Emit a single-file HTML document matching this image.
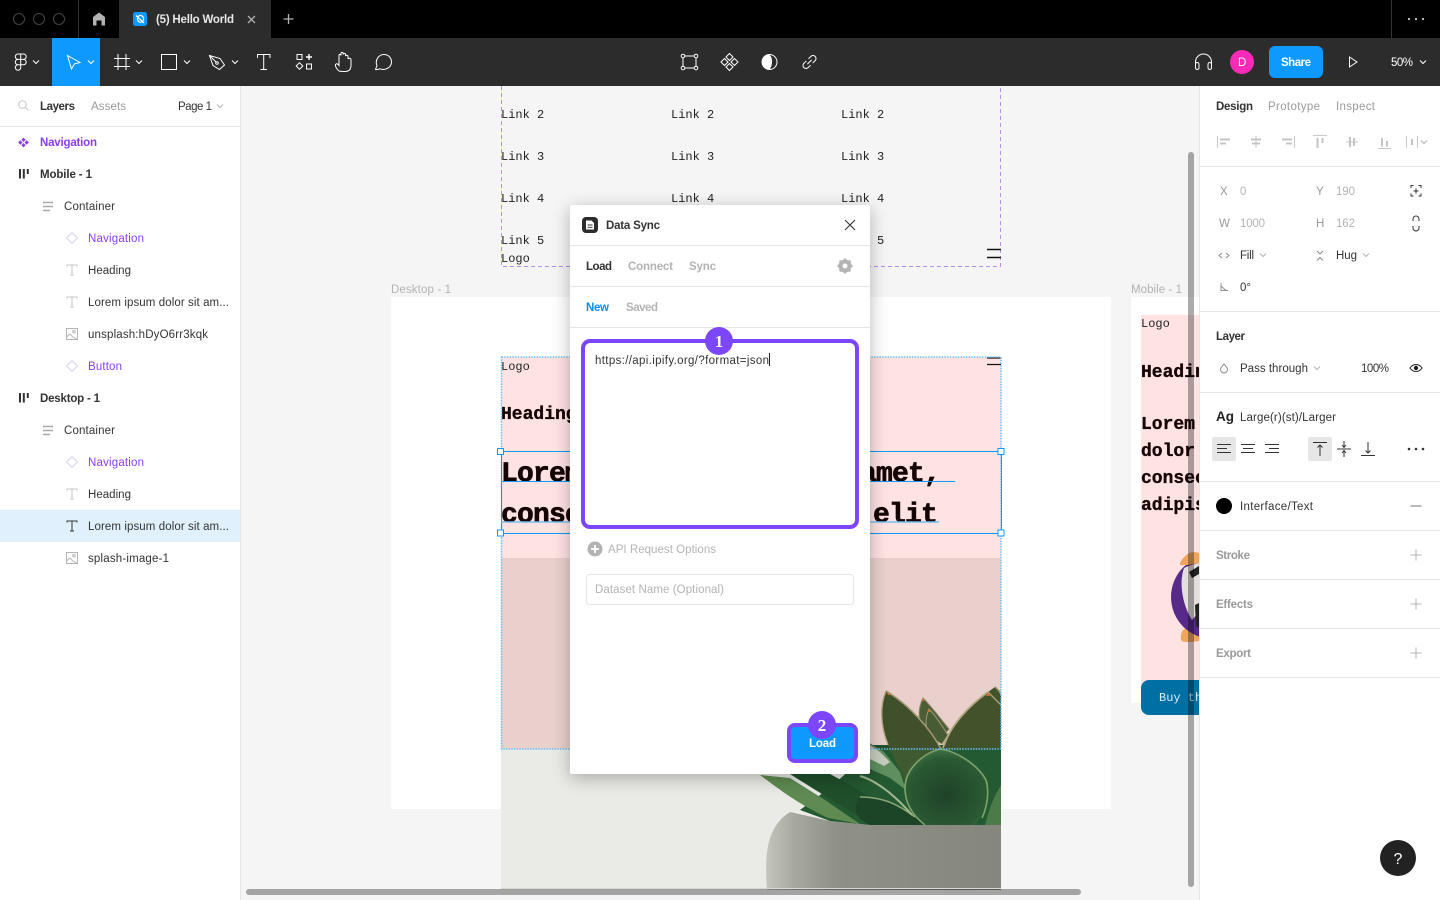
<!DOCTYPE html>
<html lang="en"><head><meta charset="utf-8"><title>(5) Hello World</title>
<style>
html,body{margin:0;padding:0;width:1440px;height:900px;overflow:hidden;background:#f5f5f5}
svg{display:block;position:absolute;left:0;top:0}
text{font-family:"Liberation Sans",sans-serif;font-size:11.5px;fill:#333;white-space:pre}
.b{font-weight:700}
.g{fill:#9a9a9a}
.lg{fill:#b3b3b3}
.p{fill:#8a3ff0}
.w{fill:#fff}
.m{font-family:"Liberation Mono",monospace;font-size:12px;fill:#222}
.mb{font-family:"Liberation Mono",monospace;font-weight:700;fill:#160404;stroke:#160404;stroke-width:.35px}
.big{font-size:28px;letter-spacing:-.8px;stroke-width:.7px}
.ic{fill:none;stroke:#fff;stroke-width:1}
.icl{fill:none;stroke:#c4c4c4;stroke-width:1}
</style></head><body>
<svg width="1440" height="900" viewBox="0 0 1440 900" xmlns="http://www.w3.org/2000/svg">
<defs>
<path id="chev" d="M-3 -1.5L0 1.5L3 -1.5" fill="none" stroke="#fff" stroke-width="1"/>
<path id="chevg" d="M-3 -1.5L0 1.5L3 -1.5" fill="none" stroke="#b3b3b3" stroke-width="1"/>
<path id="tt" d="M-5 -3.5V-5H5V-3.5M0 -5V5M-2 5H2" fill="none" stroke="#c4c4c4" stroke-width="1"/>
<path id="dia" d="M0 -5.5L5.5 0L0 5.5L-5.5 0Z" fill="none" stroke="#dccff5" stroke-width="1"/>
<g id="cont"><path d="M0 .5H10M0 4.500H10M0 8.500H7" stroke="#a8a8a8" stroke-width="1.400" fill="none"/></g>
<g id="fr"><path d="M1 0V9.500M4.800 0V9.500M8.800 0V5" stroke="#333" stroke-width="2" fill="none"/></g>
<g id="im"><rect x=".5" y=".5" width="11" height="11" fill="none" stroke="#b3b3b3"/><path d="M.5 9L4 6L7 9L11.5 11.5" fill="none" stroke="#b3b3b3"/><circle cx="8" cy="3.700" r="1.200" fill="none" stroke="#b3b3b3"/></g>
<g id="plus"><path d="M-5.500 0H5.500M0 -5.500V5.500" stroke="#b3b3b3" stroke-width="1" fill="none"/></g>
<linearGradient id="pot" x1="0" x2="1" y1="0" y2="0"><stop offset="0" stop-color="#c4c6bc"/><stop offset=".12" stop-color="#a7a99f"/><stop offset=".3" stop-color="#8f9189"/><stop offset="1" stop-color="#85877f"/></linearGradient>
<radialGradient id="rl" cx=".5" cy=".6" r=".6"><stop offset="0" stop-color="#1f4228"/><stop offset=".8" stop-color="#2a5a33"/><stop offset="1" stop-color="#3f7544"/></radialGradient>
<clipPath id="cv"><rect x="241" y="86" width="958" height="814"/></clipPath>
<clipPath id="img"><rect x="501" y="558" width="500" height="332"/></clipPath>
<clipPath id="mob"><rect x="1131" y="280" width="68" height="450"/></clipPath>
<filter id="sh" x="-20%" y="-10%" width="140%" height="120%"><feGaussianBlur stdDeviation="9"/></filter>
</defs>

<!-- canvas -->
<rect x="241" y="86" width="958" height="814" fill="#f5f5f5"/>
<g clip-path="url(#cv)">
  <path d="M501.500 86V266.500H1000.500V86" fill="none" stroke="#b78df0" stroke-dasharray="4 3"/>
  <text class="m" x="501" y="118">Link 2</text><text class="m" x="671" y="118">Link 2</text><text class="m" x="841" y="118">Link 2</text>
  <text class="m" x="501" y="160">Link 3</text><text class="m" x="671" y="160">Link 3</text><text class="m" x="841" y="160">Link 3</text>
  <text class="m" x="501" y="202">Link 4</text><text class="m" x="671" y="202">Link 4</text><text class="m" x="841" y="202">Link 4</text>
  <text class="m" x="501" y="244">Link 5</text><text class="m" x="671" y="244">Link 5</text><text class="m" x="841" y="244">Link 5</text>
  <text class="m" x="501" y="262">Logo</text>
  <path d="M987 249.500H1001M987 257.500H1001" stroke="#111" stroke-width="1.400"/>

  <text x="391" y="293" class="lg" textLength="60">Desktop - 1</text>
  <text x="1131" y="293" class="lg" textLength="51">Mobile - 1</text>

  <!-- desktop frame -->
  <rect x="391" y="297" width="720" height="512" fill="#fff"/>
  <rect x="501" y="357" width="500" height="201" fill="#ffe3e3"/>
  <g clip-path="url(#img)">
    <rect x="501" y="558" width="500" height="332" fill="#eaeae6"/>
    <!-- pot -->
    <path d="M767 890C764 850 768 826 790 812L830 821L870 825H1001V890Z" fill="url(#pot)"/>
    <!-- dark plant mass -->
    <path d="M800 810C820 795 850 775 870 745L950 745L1001 745V825H870L830 821Z" fill="#245a31"/>
    <path d="M760 775C780 790 800 805 828 818L860 824L825 800L790 778Z" fill="#5f8a52"/>
    <path d="M790 774C815 790 840 805 872 824L905 825C880 800 850 785 830 774Z" fill="#1f4f2b"/>
    <path d="M860 797C880 797 895 802 915 817L925 825H870C850 815 855 805 860 797Z" fill="#1c4527"/>
    <path d="M860 797C880 797 895 802 915 817" fill="none" stroke="#8aa678" stroke-width="1.600"/>
    <!-- pale leaf, right of dialog -->
    <path d="M868 742L884 752L900 772L906 790L890 778L868 768Z" fill="#5f8f5f"/>
    <path d="M868 744L880 752L890 762L884 766L868 758Z" fill="#c6cdbf"/>
    <path d="M860 776C875 780 895 795 912 815" fill="none" stroke="#a3b68e" stroke-width="2"/>
    <!-- back leaves -->
    <path d="M923 698C918 708 918 718 922 728L944 735L949 729C940 718 932 707 923 698Z" fill="#4d6a3e" stroke="#8e9c74" stroke-width="1"/>
    <path d="M929 709C925 718 925 728 930 738L942 744L948 735C942 726 936 716 929 709Z" fill="#47663a" stroke="#a1ab86" stroke-width="1"/>
    <!-- left leaf -->
    <path d="M886 691C880 705 880 725 888 745L906 782L925 758L941 749C930 728 908 704 886 691Z" fill="#3f5a30"/>
    <path d="M886 691C880 705 880 725 888 745" fill="none" stroke="#b6b98e" stroke-width="1.400"/>
    <path d="M886 691C908 704 930 728 941 749" fill="none" stroke="#a3ac82" stroke-width="1.600"/>
    <!-- right leaf -->
    <path d="M995 687L1001 695V749L944 749C950 725 970 705 988 692Z" fill="#425c30"/>
    <path d="M988 692C970 705 950 725 943 748" fill="none" stroke="#b5bd95" stroke-width="1.800"/>
    <path d="M988 692L1001 705" stroke="#a9b38a" stroke-width="1.500" fill="none"/>
    <path d="M995 687L1001 693" stroke="#8d9a70" stroke-width="1.500" fill="none"/>
    <path d="M886 691l2 4h3zM923 698l-1.500 3h3zM929 709l-1.500 3h3zM988 692l-2 4h4z" fill="#c98038"/>
    <!-- round leaf -->
    <path d="M941 749C925 752 905 768 905 788C905 803 915 818 932 825H975C985 812 990 793 986 780C978 765 958 752 941 749Z" fill="url(#rl)"/>
    <path d="M925 825C912 815 905 803 905 788C905 768 925 752 941 749C958 752 978 765 986 780C989 790 988 805 982 818" fill="none" stroke="#7fa26c" stroke-width="1.600"/>
    <path d="M985 825C990 805 995 795 1001 785V825Z" fill="#4a7b48"/>
    <rect x="501" y="888" width="500" height="1" fill="#d8d8d2"/>
    <rect x="501" y="558" width="500" height="191" fill="#ffe3e3" style="mix-blend-mode:multiply"/>
  </g>
  <text class="m" x="501" y="370">Logo</text>
  <text class="mb" x="501" y="419" style="font-size:18px">Heading</text>
  <text class="mb big" x="501" y="481">Lorem</text>
  <text class="mb big" x="860" y="481">amet,</text>
  <text class="mb big" x="501" y="522">conse</text>
  <text class="mb big" x="873" y="522">elit</text>
  <path d="M987 358H1001M987 364.500H1001" stroke="#1a1010" stroke-width="1.300"/>
  <!-- selection -->
  <rect x="501.500" y="357" width="499.500" height="392" fill="none" stroke="#6cc0f7" stroke-width="1.500" stroke-dasharray="1.500 1.200"/>
  <rect x="501.500" y="451.500" width="500" height="82" fill="none" stroke="#0d99ff"/>
  <path d="M501 481.500H955" stroke="#0d99ff"/>
  <path d="M501 522H939" stroke="#74bdf2" stroke-width="1.600"/>
  <g fill="#fff" stroke="#0d99ff"><rect x="497.500" y="448.500" width="6" height="6"/><rect x="998" y="448.500" width="6" height="6"/><rect x="497.500" y="530" width="6" height="6"/><rect x="998" y="530" width="6" height="6"/></g>

  <!-- mobile frame -->
  <g clip-path="url(#mob)">
    <rect x="1131" y="297" width="68" height="406" fill="#fff"/>
    <rect x="1141" y="315" width="58" height="375" fill="#ffe3e3"/>
    <text class="m" x="1141" y="327">Logo</text>
    <text class="mb" x="1141" y="377" style="font-size:18px">Heading</text>
    <text class="mb" x="1141" y="429" style="font-size:18px">Lorem</text>
    <text class="mb" x="1141" y="456" style="font-size:18px">dolor</text>
    <text class="mb" x="1141" y="483" style="font-size:18px">consec</text>
    <text class="mb" x="1141" y="510" style="font-size:18px">adipis</text>
    <path d="M1181 640C1180 632 1184 628 1187 628L1199 632V641C1190 642 1183 643 1181 640Z" fill="#eda65c"/>
    <circle cx="1213" cy="597" r="42" fill="#572a8a"/>
    <path d="M1180 563C1183 558 1187 552 1195 552L1199 553V563L1189 565L1180 565Z" fill="#eda65c"/>
    <path d="M1184 568C1190 565 1199 563 1199 563V612L1192 620C1184 608 1178 585 1184 568Z" fill="#e4dedc"/>
    <path d="M1189 572L1199 566V574L1192 578ZM1195 605L1199 603V628L1196 626Z" fill="#222"/>
    <rect x="1141" y="680" width="70" height="35" rx="8" fill="#006fa3"/>
    <text class="m" x="1159" y="701" style="fill:#d8eef8">Buy th</text>
  </g>
</g>

<!-- dialog -->
<rect x="570" y="209" width="300" height="569" fill="#000" opacity=".28" filter="url(#sh)"/>
<rect x="570" y="205" width="300" height="569" fill="#fff" rx="2"/>
<path d="M570 245.500H870M570 286.500H870M570 327.500H870" stroke="#e5e5e5"/>
<rect x="582" y="217" width="16" height="16" rx="4" fill="#2c2c2c"/>
<path d="M586 220.500H591.500L594 223V229.500H586Z" fill="#fff"/><path d="M587.500 225H592.500M587.500 227.300H592.500" stroke="#2c2c2c" stroke-width=".9"/>
<text class="b" x="606" y="229" textLength="54">Data Sync</text>
<path d="M845 220L855 230M855 220L845 230" stroke="#333" stroke-width="1.100"/>
<text class="b" x="586" y="270" textLength="26">Load</text>
<text class="b lg" x="628" y="270" textLength="45">Connect</text>
<text class="b lg" x="689" y="270" textLength="27">Sync</text>
<g transform="translate(845 266)"><circle r="4.500" fill="none" stroke="#b3b3b3" stroke-width="4"/><path d="M0 -7.500V-5M0 5V7.500M-7.500 0H-5M5 0H7.500M-5.300 -5.300L-3.500 -3.500M3.500 3.500L5.300 5.300M-5.300 5.300L-3.500 3.500M3.500 -3.500L5.300 -5.300" stroke="#b3b3b3" stroke-width="2.400"/></g>
<text class="b" x="586" y="311" textLength="23" style="fill:#0d8ce9">New</text>
<text class="b lg" x="626" y="311" textLength="32">Saved</text>
<rect x="583" y="341" width="274" height="186" rx="7" fill="#fff" stroke="#7c46fb" stroke-width="4"/>
<circle cx="719" cy="341" r="14" fill="#7c46fb"/>
<text x="719" y="347" text-anchor="middle" style="font-family:'Liberation Serif',serif;font-weight:700;font-size:17px;fill:#fff">1</text>
<text x="595" y="364" textLength="174">https://api.ipify.org/?format=json</text>
<path d="M769.500 353V366" stroke="#222"/>
<circle cx="595" cy="549" r="7.500" fill="#b3b3b3"/><path d="M591 549H599M595 545V553" stroke="#fff" stroke-width="1.800"/>
<text class="lg" x="608" y="553" textLength="108">API Request Options</text>
<rect x="586.500" y="574.500" width="267" height="30" rx="3" fill="#fff" stroke="#e5e5e5"/>
<text class="lg" x="595" y="593" textLength="129">Dataset Name (Optional)</text>
<rect x="789" y="725" width="67" height="36" rx="6" fill="#0d99ff" stroke="#7c46fb" stroke-width="4"/>
<circle cx="822" cy="725" r="14" fill="#7c46fb"/>
<text x="822" y="731" text-anchor="middle" style="font-family:'Liberation Serif',serif;font-weight:700;font-size:17px;fill:#fff">2</text>
<text class="b w" x="809" y="747" textLength="27">Load</text>

<!-- scrollbars -->
<rect x="246" y="889" width="835" height="6" rx="3" fill="#000" opacity=".33"/>
<rect x="1188" y="152" width="6" height="735" rx="3" fill="#000" opacity=".33"/>

<!-- title bar -->
<rect width="1440" height="38" fill="#000"/>
<g fill="none" stroke="#444"><circle cx="19" cy="19" r="5.500"/><circle cx="39" cy="19" r="5.500"/><circle cx="59" cy="19" r="5.500"/></g>
<path d="M78.500 0V38M1391.500 0V38" stroke="#333"/>
<path d="M93 25.500V17L99 12.500L105 17V25.500H101.500V20.500H96.500V25.500Z" fill="#b3b3b3"/>
<rect x="119" width="152" height="38" fill="#2c2c2c"/>
<rect x="133" y="12" width="14" height="14" rx="2.500" fill="#0d99ff"/>
<path d="M136 15.500L144 23M137.500 19.500C137 16 140 14.500 142 16C144 17.500 144 20 142.500 21.500C140.500 23 138 22 137.500 19.500Z" fill="none" stroke="#fff" stroke-width="1.200"/>
<text class="b" x="156" y="23" textLength="78" style="fill:#e8e8e8">(5) Hello World</text>
<path d="M248 16L255 23M255 16L248 23" stroke="#b3b3b3" stroke-width="1.300"/>
<path d="M283.500 19H293.500M288.500 14V24" stroke="#b3b3b3" stroke-width="1.300"/>
<g fill="#ccc"><circle cx="1409" cy="19" r="1.100"/><circle cx="1416" cy="19" r="1.100"/><circle cx="1423" cy="19" r="1.100"/></g>

<!-- toolbar -->
<rect y="38" width="1440" height="48" fill="#2c2c2c"/>
<rect x="52" y="38" width="48" height="48" fill="#0d99ff"/>
<path d="M18 54H23.500A2.700 2.700 0 0 1 23.500 59.400H18M18 54A2.700 2.700 0 0 0 18 59.400H20.700V54M18 59.400A2.700 2.700 0 0 0 18 64.800H20.700V59.400M20.700 59.400H23.500A2.700 2.700 0 1 1 23.500 64.800H20.700M18 64.800A2.700 2.700 0 1 0 20.700 67.500V64.800" class="ic"/>
<use href="#chev" x="36" y="62"/>
<path class="ic" d="M67.500 55.500L80 62.500L74.500 63.800L71.500 69Z"/>
<use href="#chev" x="91" y="62"/>
<path class="ic" d="M114 58.500H130M114 66.500H130M118 54V70M126 54V70"/>
<use href="#chev" x="139" y="62"/>
<rect class="ic" x="161.500" y="54.500" width="15" height="15"/>
<use href="#chev" x="187" y="62"/>
<path class="ic" d="M209.500 55.500L220 58.500L224.500 65L219.500 69.500L213 65.500Z"/><path class="ic" d="M209.500 55.500L216.500 62.500"/><circle class="ic" cx="217" cy="63" r="1.300"/>
<use href="#chev" x="235" y="62"/>
<path class="ic" d="M257.500 58V54.500H270V58M263.700 54.500V69.500M260.500 69.500H267"/>
<rect class="ic" x="297" y="54.500" width="5" height="5"/><rect class="ic" x="306.500" y="64" width="5" height="5"/>
<path class="ic" d="M299.500 62.700L302.800 66L299.500 69.300L296.200 66Z"/><path d="M309 54V60M306 57H312" stroke="#fff" stroke-width="1.400"/>
<path class="ic" d="M339 71C336 68.500 335 65.500 335.500 64.500C336.500 63 338 64 339 65.500V55.500C339 54 341 54 341 55.500V53.500C341 52 343.200 52 343.200 53.500V54.500C343.500 53 345.500 53 345.500 54.500V56C346 54.800 348 55 348 56.500V59C348.500 58 351 58 351 59.500V65C351 69 349 71.500 345 71.500C342.500 71.500 340.500 71.500 339 71Z"/>
<path class="ic" d="M375.500 69.500L377 65.500C374.500 60 379 54.500 384 54.500C388.500 54.500 391.500 58 391.500 62C391.500 67 386 71 380 68.800C378.500 69.500 377 69.700 375.500 69.500Z"/>
<!-- center tools -->
<path class="ic" d="M683.500 56H695.500M683.500 68H695.500M683 56.500V67.500M696 56.500V67.500"/>
<g fill="#2c2c2c" stroke="#fff"><circle cx="683" cy="56" r="1.800"/><circle cx="696" cy="56" r="1.800"/><circle cx="683" cy="68" r="1.800"/><circle cx="696" cy="68" r="1.800"/></g>
<path class="ic" d="M729.500 53.500L733 57L729.500 60.500L726 57ZM729.500 63.500L733 67L729.500 70.500L726 67ZM724.500 58.500L728 62L724.500 65.500L721 62ZM734.500 58.500L738 62L734.500 65.500L731 62Z"/>
<circle class="ic" cx="769.500" cy="62" r="7.500"/><path d="M769.500 54.500A7.500 7.500 0 0 0 769.500 69.500C771.500 67 772 64 772 62C772 59 771.500 57 769.500 54.500Z" fill="#fff"/>
<g transform="translate(809.500 62) rotate(45)"><path class="ic" d="M-3 -1.500V-5A3 3 0 0 1 3 -5V-1.500M3 1.500V5A3 3 0 0 1 -3 5V1.500M0 -3V3"/></g>
<!-- right tools -->
<path class="ic" d="M1195.500 67V62A8 8 0 0 1 1211.500 62V67"/><rect class="ic" x="1195.500" y="62.500" width="3.500" height="7" rx="1.700"/><rect class="ic" x="1208" y="62.500" width="3.500" height="7" rx="1.700"/>
<circle cx="1242" cy="62" r="12" fill="#fa2bb8"/>
<text x="1238" y="66" class="w">D</text>
<rect x="1269" y="46" width="54" height="32" rx="6" fill="#0d99ff"/>
<text class="b w" x="1281" y="66" textLength="30">Share</text>
<path class="ic" d="M1349.500 57L1357 62L1349.500 67Z"/>
<text class="w" x="1391" y="66" textLength="22">50%</text>
<use href="#chev" x="1423" y="62"/>

<!-- left panel -->
<rect x="0" y="86" width="240" height="814" fill="#fff"/>
<path d="M240.500 86V900M0 126.500H240" stroke="#e5e5e5"/>
<circle class="icl" cx="22.500" cy="104.500" r="3.800"/><path d="M25.500 107.500L28.500 110.500" stroke="#c4c4c4"/>
<text class="b" x="40" y="110" textLength="35">Layers</text>
<text class="g" x="91" y="110" textLength="35">Assets</text>
<text x="178" y="110" textLength="34">Page 1</text>
<use href="#chevg" x="220" y="106"/>
<rect x="0" y="510" width="240" height="32" fill="#e0f1fd"/>
<path fill="#8a3ff0" d="M23.500 137.600L25.700 139.800L23.500 142L21.300 139.800ZM23.500 143L25.700 145.200L23.500 147.400L21.300 145.200ZM20.300 140.300L22.500 142.500L20.300 144.700L18.100 142.500ZM26.700 140.300L28.900 142.500L26.700 144.700L24.500 142.500Z"/>
<text class="b p" x="40" y="146" textLength="57">Navigation</text>
<use href="#fr" x="19" y="169"/>
<text class="b" x="40" y="178" textLength="52">Mobile - 1</text>
<use href="#cont" x="43" y="202"/>
<text x="64" y="210" textLength="51">Container</text>
<use href="#dia" x="72" y="238"/>
<text class="p" x="88" y="242" textLength="56">Navigation</text>
<use href="#tt" x="72" y="270"/>
<text x="88" y="274" textLength="43">Heading</text>
<use href="#tt" x="72" y="302"/>
<text x="88" y="306" textLength="141">Lorem ipsum dolor sit am...</text>
<use href="#im" x="66" y="328"/>
<text x="88" y="338" textLength="120">unsplash:hDyO6rr3kqk</text>
<use href="#dia" x="72" y="366"/>
<text class="p" x="88" y="370" textLength="34">Button</text>
<use href="#fr" x="19" y="393"/>
<text class="b" x="40" y="402" textLength="60">Desktop - 1</text>
<use href="#cont" x="43" y="426"/>
<text x="64" y="434" textLength="51">Container</text>
<use href="#dia" x="72" y="462"/>
<text class="p" x="88" y="466" textLength="56">Navigation</text>
<use href="#tt" x="72" y="494"/>
<text x="88" y="498" textLength="43">Heading</text>
<path d="M67 522.500V521H77V522.500M72 521V531M70 531H74" fill="none" stroke="#333"/>
<text x="88" y="530" textLength="141">Lorem ipsum dolor sit am...</text>
<use href="#im" x="66" y="552"/>
<text x="88" y="562" textLength="81">splash-image-1</text>

<!-- right panel -->
<rect x="1200" y="86" width="240" height="814" fill="#fff"/>
<path d="M1199.500 86V900" stroke="#e5e5e5"/>
<path d="M1200 166.500H1440M1200 311.500H1440M1200 392.500H1440M1200 481.500H1440M1200 530.500H1440M1200 579.500H1440M1200 628.500H1440M1200 677.500H1440" stroke="#e5e5e5"/>
<text class="b" x="1216" y="110" textLength="37">Design</text>
<text class="g" x="1268" y="110" textLength="52">Prototype</text>
<text class="g" x="1336" y="110" textLength="39">Inspect</text>
<g fill="none" stroke="#c8c8c8" stroke-width="1">
<path d="M1217.500 136V148"/>
<path d="M1256 136V148"/>
<path d="M1294.500 136V148"/>
<path d="M1313 135.500H1327"/>
<path d="M1346 142H1358"/>
<path d="M1378 148.500H1391"/>
<path d="M1406.500 136V148M1417.500 136V148"/>
</g>
<g fill="none" stroke="#c4c4c4" stroke-width="2">
<path d="M1220 139.500H1230M1220 143.500H1226"/>
<path d="M1251 139.500H1261M1252 143.500H1260"/>
<path d="M1282 139.500H1292M1286 143.500H1292"/>
<path d="M1317.500 138V148M1322.500 138V143"/>
<path d="M1350 137V147M1354 138V146"/>
<path d="M1382 138V146.500M1387 141V146.500"/>
<path d="M1412 139V145"/>
</g>
<use href="#chevg" x="1424" y="142"/>
<text class="g" x="1220" y="195">X</text><text class="lg" x="1240" y="195">0</text>
<text class="g" x="1316" y="195">Y</text><text class="lg" x="1336" y="195" textLength="19">190</text>
<path d="M1411 188V185.500H1413.500M1418.500 185.500H1421V188M1421 193.500V196H1418.500M1413.500 196H1411V193.500" fill="none" stroke="#333"/><path d="M1413.500 191H1418.500M1416 188.500V193.500" stroke="#333"/>
<text class="g" x="1219" y="227">W</text><text class="lg" x="1240" y="227" textLength="25">1000</text>
<text class="g" x="1316" y="227">H</text><text class="lg" x="1336" y="227" textLength="19">162</text>
<path d="M1413 221V219A3 3 0 0 1 1419 219V221M1413 226V228A3 3 0 0 0 1419 228V226" fill="none" stroke="#333"/>
<path d="M1222 253L1219 255.500L1222 258M1226 253L1229 255.500L1226 258" fill="none" stroke="#8c8c8c"/>
<text x="1240" y="259" textLength="14">Fill</text><use href="#chevg" x="1263" y="255"/>
<path d="M1317 251L1320 254L1323 251M1317 260.500L1320 257.500L1323 260.500" fill="none" stroke="#8c8c8c"/>
<text x="1336" y="259" textLength="21">Hug</text><use href="#chevg" x="1366" y="255"/>
<path d="M1221 283V290.500H1228M1221 286L1226 290.500" fill="none" stroke="#8c8c8c"/>
<text x="1240" y="291">0°</text>
<text class="b" x="1216" y="340" textLength="29">Layer</text>
<path d="M1224 364C1222 366.500 1220.500 368 1220.500 369.500A3.500 3.500 0 0 0 1227.500 369.500C1227.500 368 1226 366.500 1224 364Z" fill="none" stroke="#8c8c8c"/>
<text x="1240" y="372" textLength="68">Pass through</text><use href="#chevg" x="1317" y="368"/>
<text x="1361" y="372" textLength="28">100%</text>
<path d="M1410 368C1412 365 1414 364.500 1416 364.500C1418 364.500 1420 365 1422 368C1420 371 1418 371.500 1416 371.500C1414 371.500 1412 371 1410 368Z" fill="none" stroke="#222"/><circle cx="1416" cy="368" r="2.200" fill="#222"/>
<text class="b" x="1216" y="421" style="font-size:13.500px;fill:#222">Ag</text>
<text x="1240" y="421" textLength="96">Large(r)(st)/Larger</text>
<rect x="1212" y="437" width="24" height="24" rx="2" fill="#e6e6e6"/>
<rect x="1308" y="437" width="24" height="24" rx="2" fill="#e6e6e6"/>
<g fill="none" stroke="#333">
<path d="M1217 444.500H1231M1217 448.500H1227M1217 452.500H1231"/>
<path d="M1241 444.500H1255M1243 448.500H1253M1241 452.500H1255"/>
<path d="M1265 444.500H1279M1269 448.500H1279M1265 452.500H1279"/>
<path d="M1313 442.500H1327M1320 456V445M1317.500 447.500L1320 445L1322.500 447.500"/>
<path d="M1337 449H1351M1344 441V447M1342 445L1344 447.500L1346 445M1344 457V451M1342 453L1344 450.500L1346 453"/>
<path d="M1361 455.500H1375M1368 442V453M1365.500 450.500L1368 453L1370.500 450.500"/>
</g>
<g fill="#333"><circle cx="1409" cy="449" r="1.300"/><circle cx="1416" cy="449" r="1.300"/><circle cx="1423" cy="449" r="1.300"/></g>
<circle cx="1224" cy="506" r="8" fill="#000"/>
<text x="1240" y="510" textLength="73">Interface/Text</text>
<path d="M1410.500 506H1421.500" stroke="#8c8c8c" stroke-width="1.200"/>
<text class="b g" x="1216" y="559" textLength="34">Stroke</text><use href="#plus" x="1416" y="555"/>
<text class="b g" x="1216" y="608" textLength="37">Effects</text><use href="#plus" x="1416" y="604"/>
<text class="b g" x="1216" y="657" textLength="35">Export</text><use href="#plus" x="1416" y="653"/>
<circle cx="1398" cy="858" r="18" fill="#222"/>
<text x="1398" y="864" text-anchor="middle" class="w" style="font-size:16px">?</text>
</svg>
</body></html>
